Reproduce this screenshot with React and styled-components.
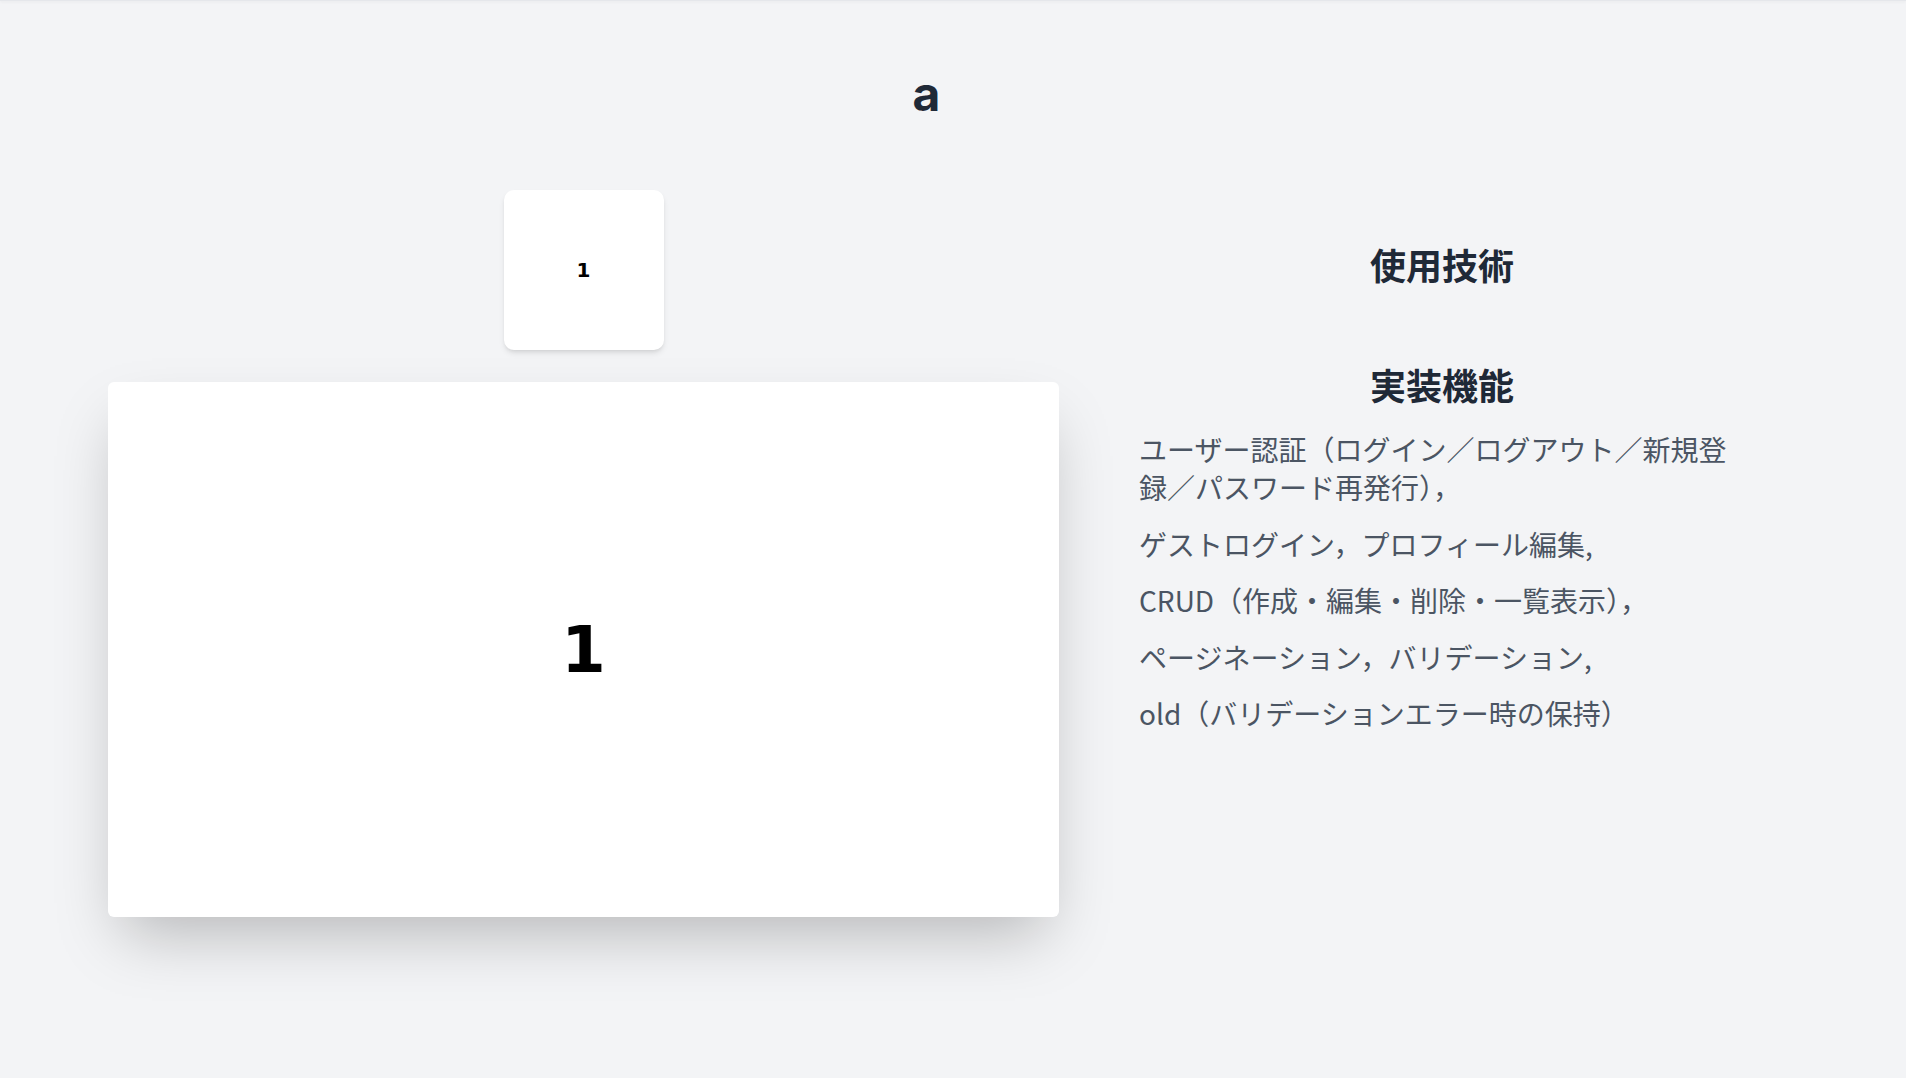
import React from 'react';
import styled, { createGlobalStyle } from 'styled-components';

// Page reset and background
const GlobalStyle = createGlobalStyle`
  html, body {
    margin: 0;
    padding: 0;
    background-color: #f3f4f6;
  }
  body {
    min-height: 100vh;
    font-family: "Noto Sans CJK JP", "Noto Sans", sans-serif;
  }
`;

// Thin shadow at the very top of the page (header above the viewport)
const TopEdge = styled.div`
  height: 1px;
  background-color: #e5e7eb;
  box-shadow: 0 1px 3px rgba(0, 0, 0, 0.08);
`;

// Main container: holds title and the two columns
const Container = styled.div`
  width: 1637px;
  margin-left: 108px;
  padding-top: 69px;
  padding-bottom: 140px;
`;

const Title = styled.h1`
  margin: 0;
  text-align: center;
  font-family: "Inter", "Noto Sans CJK JP", sans-serif;
  font-size: 48px;
  line-height: 48px;
  font-weight: 700;
  color: #1f2937;
`;

const Row = styled.div`
  display: flex;
  align-items: flex-start;
  gap: 80px;
  margin-top: 72px;
`;

// Left side: thumbnail card above the big preview card
const LeftColumn = styled.div`
  width: 951px;
  display: flex;
  flex-direction: column;
  align-items: center;
  gap: 32px;
`;

const Card = styled.div`
  display: flex;
  align-items: center;
  justify-content: center;
  background-color: #ffffff;
  width: ${(p) => (p.$big ? '951px' : '160px')};
  height: ${(p) => (p.$big ? '535px' : '160px')};
  border-radius: ${(p) => (p.$big ? '6px' : '10px')};
  box-shadow: ${(p) =>
    p.$big
      ? '0 30px 60px -14px rgba(0, 0, 0, 0.25)'
      : '0 4px 6px -1px rgba(0, 0, 0, 0.1), 0 2px 4px -2px rgba(0, 0, 0, 0.1)'};
`;

const CardLabel = styled.span`
  font-family: "DejaVu Sans", sans-serif;
  font-weight: 700;
  color: #000000;
  font-size: ${(p) => (p.$big ? '64px' : '20px')};
  line-height: 1;
`;

// Right side: tech / feature sections
const RightColumn = styled.div`
  width: 606px;
  padding-top: 54px;
`;

const Section = styled.section`
  margin-bottom: 54px;
`;

const SectionTitle = styled.h2`
  margin: 0 0 26px;
  text-align: center;
  font-size: 36px;
  line-height: 40px;
  font-weight: 700;
  color: #1f2937;
`;

const FeatureList = styled.div`
  display: flex;
  flex-direction: column;
  gap: 18.5px;
`;

const FeatureText = styled.p`
  margin: 0;
  font-size: 28px;
  line-height: 38px;
  color: #4b5563;
`;

const features = [
  'ユーザー認証（ログイン／ログアウト／新規登録／パスワード再発行），',
  'ゲストログイン，プロフィール編集,',
  'CRUD（作成・編集・削除・一覧表示），',
  'ページネーション，バリデーション,',
  'old（バリデーションエラー時の保持）',
];

const App = () => {
  return (
    <>
      <GlobalStyle />
      <TopEdge />
      <Container>
        <Title>a</Title>
        <Row>
          <LeftColumn>
            <Card>
              <CardLabel>1</CardLabel>
            </Card>
            <Card $big>
              <CardLabel $big>1</CardLabel>
            </Card>
          </LeftColumn>

          <RightColumn>
            <Section>
              <SectionTitle>使用技術</SectionTitle>
              <FeatureList />
            </Section>
            <Section>
              <SectionTitle>実装機能</SectionTitle>
              <FeatureList>
                {features.map((f) => (
                  <FeatureText key={f}>{f}</FeatureText>
                ))}
              </FeatureList>
            </Section>
          </RightColumn>
        </Row>
      </Container>
    </>
  );
};

export default App;
